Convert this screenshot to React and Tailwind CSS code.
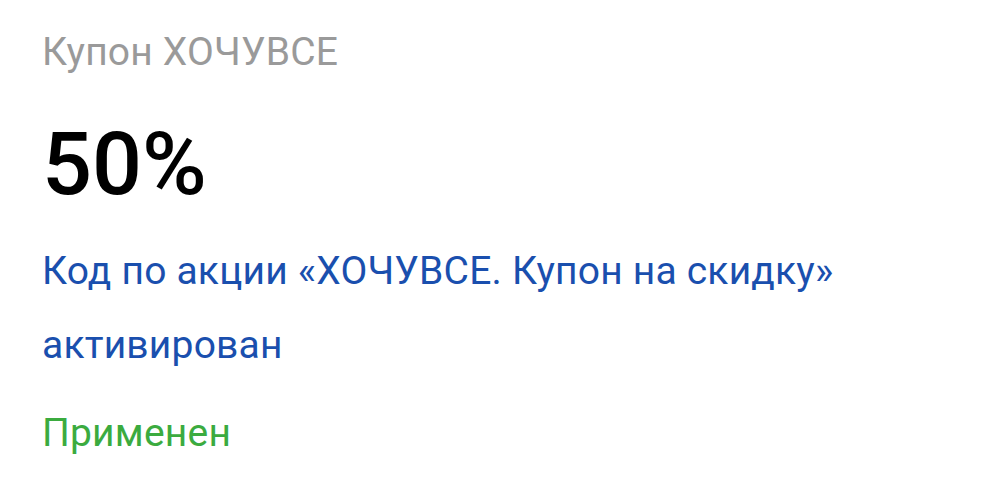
export default function App() {
  return (
    <div className="min-h-screen bg-white pl-[42px] pr-[40px] pt-[29px] font-['Roboto',sans-serif]">
      <div className="text-[39px] leading-[46px] tracking-[0.2px] text-[#9a9a9a]">Купон ХОЧУВСЕ</div>
      <div className="mt-[45px] text-[88px] font-medium leading-[88px] text-black">50%</div>
      <div className="mt-[26px] text-[39px] leading-[74px] tracking-[0.2px] text-[#1a4fae]">
        Код по акции «ХОЧУВСЕ. Купон на скидку» активирован
      </div>
      <div className="mt-[14px] text-[39px] leading-[74px] tracking-[0.2px] text-[#3bab3f]">Применен</div>
    </div>
  );
}
